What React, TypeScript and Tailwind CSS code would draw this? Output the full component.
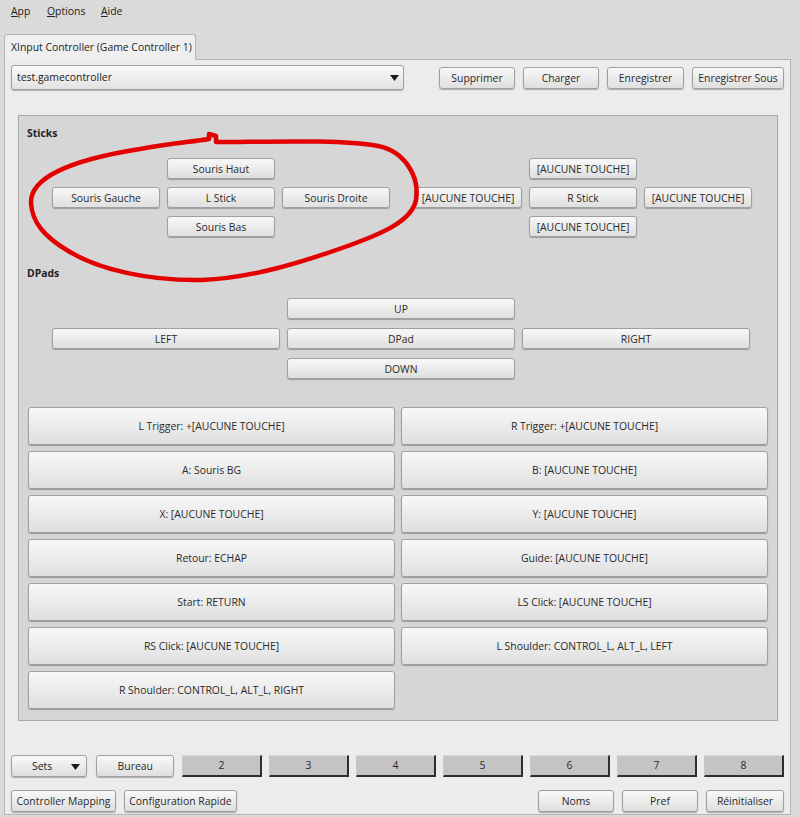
import React from "react"
import clsx from "clsx"

const Btn = ({
  children,
  className,
}: {
  children?: React.ReactNode
  className?: string
}) => (
  <button
    className={clsx(
      "flex items-center justify-center rounded-[3px] border border-[#a0a0a0] bg-linear-to-b from-[#f8f8f8] to-[#dfdfdf] pt-px shadow-[0_1px_1px_rgba(0,0,0,0.28)] text-[10.4px] leading-none text-[#2a2a2a] whitespace-nowrap",
      className,
    )}
  >
    {children}
  </button>
)

const NumBtn = ({ label }: { label: string }) => (
  <button className="flex h-[22px] w-[80px] items-center justify-center border-t border-l border-t-[#dadada] border-l-[#c8c8c8] border-r-2 border-b-2 border-r-[#2e2e2e] border-b-[#2e2e2e] bg-[#c4c4c4] text-[10.4px] leading-none text-[#2a2a2a]">
    {label}
  </button>
)

const Stick = ({
  up,
  left,
  center,
  right,
  down,
}: {
  up: string
  left: string
  center: string
  right: string
  down: string
}) => (
  <div className="grid grid-cols-[108px_108px_108px] auto-rows-[21px] gap-x-[7px] gap-y-[8px]">
    <Btn className="col-start-2 row-start-1">{up}</Btn>
    <Btn className="col-start-1 row-start-2">{left}</Btn>
    <Btn className="col-start-2 row-start-2">{center}</Btn>
    <Btn className="col-start-3 row-start-2">{right}</Btn>
    <Btn className="col-start-2 row-start-3">{down}</Btn>
  </div>
)

const mappings = [
  "L Trigger: +[AUCUNE TOUCHE]",
  "R Trigger: +[AUCUNE TOUCHE]",
  "A: Souris BG",
  "B: [AUCUNE TOUCHE]",
  "X: [AUCUNE TOUCHE]",
  "Y: [AUCUNE TOUCHE]",
  "Retour: ECHAP",
  "Guide: [AUCUNE TOUCHE]",
  "Start: RETURN",
  "LS Click: [AUCUNE TOUCHE]",
  "RS Click: [AUCUNE TOUCHE]",
  "L Shoulder: CONTROL_L, ALT_L, LEFT",
  "R Shoulder: CONTROL_L, ALT_L, RIGHT",
]

const App = () => {
  return (
    <div className="relative flex h-[817px] w-[800px] flex-col overflow-hidden bg-[#dadada] font-['Open_Sans','Noto_Sans',sans-serif] text-[10.4px] text-[#222]">
      {/* menu bar */}
      <div className="flex h-[24px] items-center pl-[11px]">
        <span className="w-[36px]">
          <span className="underline">A</span>pp
        </span>
        <span className="w-[54px]">
          <span className="underline">O</span>ptions
        </span>
        <span>
          <span className="underline">A</span>ide
        </span>
      </div>

      <div className="mt-[10px] flex flex-col px-[4px]">
        {/* tab */}
        <div className="relative z-10 flex h-[26px] w-[192px] items-center whitespace-nowrap rounded-t-[3px] border border-b-0 border-[#b4b4b4] bg-[#efefef] pl-[6px]">
          XInput Controller (Game Controller 1)
        </div>

        {/* pane */}
        <div className="-mt-px flex h-[756px] w-[787px] flex-col border border-[#b4b4b4] bg-[#ececec] px-[6px] pt-[5px]">
          <div className="flex items-center">
            <div className="flex h-[25px] w-[393px] items-center justify-between rounded-[3px] border border-[#a0a0a0] bg-linear-to-b from-[#fafafa] to-[#e2e2e2] pr-[4px] pl-[5px] shadow-[0_1px_1px_rgba(0,0,0,0.25)]">
              <span>test.gamecontroller</span>
              <svg width="9" height="6" viewBox="0 0 9 6">
                <path d="M0 0 L9 0 L4.5 6 Z" fill="#1a1a1a" />
              </svg>
            </div>
            <div className="ml-auto flex gap-[8px]">
              <Btn className="h-[22px] w-[76px]">Supprimer</Btn>
              <Btn className="h-[22px] w-[76px]">Charger</Btn>
              <Btn className="h-[22px] w-[77px]">Enregistrer</Btn>
              <Btn className="h-[22px] w-[92px]">Enregistrer Sous</Btn>
            </div>
          </div>

          {/* group */}
          <div className="mt-[25px] ml-[7px] flex h-[606px] w-[760px] flex-col border border-[#a8a8a8] bg-[#d6d6d6]">
            <div className="mt-[10px] pl-[8px] leading-[15px] font-bold">Sticks</div>
            <div className="mt-[17px] flex gap-[24px] pl-[33px]">
              <Stick
                up="Souris Haut"
                left="Souris Gauche"
                center="L Stick"
                right="Souris Droite"
                down="Souris Bas"
              />
              <Stick
                up="[AUCUNE TOUCHE]"
                left="[AUCUNE TOUCHE]"
                center="R Stick"
                right="[AUCUNE TOUCHE]"
                down="[AUCUNE TOUCHE]"
              />
            </div>

            <div className="mt-[29px] pl-[8px] leading-[15px] font-bold">DPads</div>
            <div className="mt-[17px] ml-[33px] grid grid-cols-[228px_228px_228px] auto-rows-[21px] gap-x-[7px] gap-y-[9px]">
              <Btn className="col-start-2 row-start-1">UP</Btn>
              <Btn className="col-start-1 row-start-2">LEFT</Btn>
              <Btn className="col-start-2 row-start-2">DPad</Btn>
              <Btn className="col-start-3 row-start-2">RIGHT</Btn>
              <Btn className="col-start-2 row-start-3">DOWN</Btn>
            </div>

            <div className="mt-[28px] ml-[9px] grid w-[740px] grid-cols-2 auto-rows-[38px] gap-x-[6px] gap-y-[6px]">
              {mappings.map((m) => (
                <Btn key={m}>{m}</Btn>
              ))}
            </div>
          </div>

          {/* bottom rows */}
          <div className="mt-[34px] flex items-center">
            <button className="flex h-[22px] w-[78px] items-center justify-between rounded-[3px] border border-[#a0a0a0] bg-linear-to-b from-[#f8f8f8] to-[#dfdfdf] pt-px pr-[6px] pl-[20px] shadow-[0_1px_1px_rgba(0,0,0,0.28)]">
              <span>Sets</span>
              <svg width="9" height="6" viewBox="0 0 9 6">
                <path d="M0 0 L9 0 L4.5 6 Z" fill="#1a1a1a" />
              </svg>
            </button>
            <Btn className="ml-[9px] h-[22px] w-[80px]">Bureau</Btn>
            <div className="ml-[8px] flex gap-[7px]">
              {["2", "3", "4", "5", "6", "7", "8"].map((n) => (
                <NumBtn key={n} label={n} />
              ))}
            </div>
          </div>

          <div className="mt-[13px] flex items-center">
            <Btn className="h-[22px] w-[105px]">Controller Mapping</Btn>
            <Btn className="ml-[8px] h-[22px] w-[113px]">Configuration Rapide</Btn>
            <div className="ml-auto flex gap-[8px]">
              <Btn className="h-[22px] w-[76px]">Noms</Btn>
              <Btn className="h-[22px] w-[76px]">Pref</Btn>
              <Btn className="h-[22px] w-[78px]">Réinitialiser</Btn>
            </div>
          </div>
        </div>
      </div>

      {/* red hand-drawn annotation */}
      <svg
        className="pointer-events-none absolute top-0 left-0"
        width="800"
        height="817"
        viewBox="0 0 800 817"
      >
        <path
          d="M 31 203 C 30 178, 70 160, 140 149 C 170 143, 192 142, 209 139 L 209 134 L 216 136 L 216 142 C 262 142, 338 139, 378 146 C 404 151, 420 176, 416 200 C 412 221, 382 234, 342 248 C 302 262, 252 278, 202 280 C 150 281, 100 270, 70 252 C 44 237, 32 222, 31 203 Z"
          fill="none"
          stroke="#e30000"
          strokeWidth="4.5"
          strokeLinejoin="round"
        />
      </svg>
    </div>
  )
}

export default App
